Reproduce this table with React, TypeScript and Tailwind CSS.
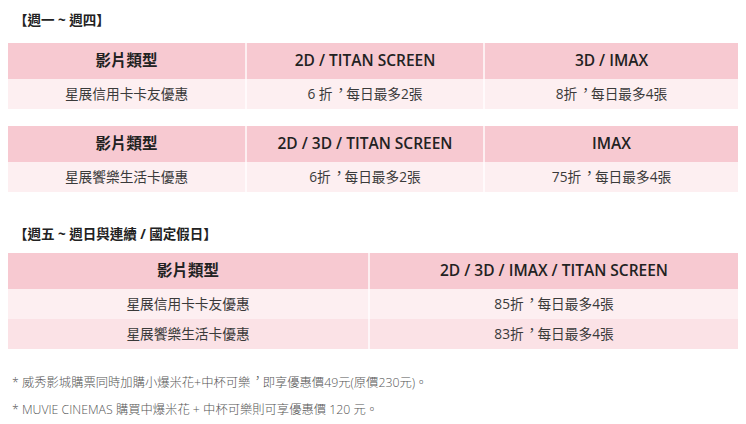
import React from 'react';

const font = { fontFamily: '"Open Sans", "Noto Sans CJK TC", sans-serif' };

type Row = string[];

// 全形逗號置中（台灣排版）
function Comma() {
  return (
    <span className="inline-block w-[1em] overflow-visible">
      <span className="inline-block translate-x-[0.1em] -translate-y-[0.3em]">，</span>
    </span>
  );
}

function Cell({ text }: { text: string }) {
  const parts = text.split('，');
  return (
    <>
      {parts.map((p, i) => (
        <React.Fragment key={i}>
          {p}
          {i < parts.length - 1 && <Comma />}
        </React.Fragment>
      ))}
    </>
  );
}

function PriceTable({
  head,
  rows,
  cols,
}: {
  head: Row;
  rows: Row[];
  cols: string;
}) {
  return (
    <div className="mx-2 text-[#3a3a3a]">
      <div className={`grid ${cols} h-9 bg-[#f7c9d1]`}>
        {head.map((h, i) => (
          <div
            key={i}
            className={`flex items-center justify-center text-[15.5px] font-semibold text-[#222] ${
              i > 0 ? 'border-l-2 border-white/70' : ''
            }`}
          >
            {h}
          </div>
        ))}
      </div>
      {rows.map((r, ri) => (
        <div
          key={ri}
          className={`grid ${cols} h-[30px] ${ri % 2 === 0 ? 'bg-[#fdeff1]' : 'bg-[#fbe2e6]'}`}
        >
          {r.map((c, i) => (
            <div
              key={i}
              className={`flex items-center justify-center text-[13.7px] ${
                i > 0 ? 'border-l-2 border-white/70' : ''
              }`}
            >
              <span>
                <Cell text={c} />
              </span>
            </div>
          ))}
        </div>
      ))}
    </div>
  );
}

export default function App() {
  return (
    <div lang="zh-TW" className="w-[746px] h-[424px] bg-white pt-[11px]" style={font}>
      <div className="pl-[14px] text-[13.5px] font-bold text-[#222] leading-[18px]">【週一 ~ 週四】</div>
      <div className="mt-[14px]">
        <PriceTable
          cols="grid-cols-[237px_238px_1fr]"
          head={['影片類型', '2D / TITAN SCREEN', '3D / IMAX']}
          rows={[['星展信用卡卡友優惠', '6 折，每日最多2張', '8折，每日最多4張']]}
        />
      </div>
      <div className="mt-[17px]">
        <PriceTable
          cols="grid-cols-[237px_238px_1fr]"
          head={['影片類型', '2D / 3D / TITAN SCREEN', 'IMAX']}
          rows={[['星展饗樂生活卡優惠', '6折，每日最多2張', '75折，每日最多4張']]}
        />
      </div>
      <div className="mt-[33px] pl-[14px] text-[13.5px] font-bold text-[#222] leading-[18px]">
        【週五 ~ 週日與連續 / 國定假日】
      </div>
      <div className="mt-[10px]">
        <PriceTable
          cols="grid-cols-[360px_1fr]"
          head={['影片類型', '2D / 3D / IMAX / TITAN SCREEN']}
          rows={[
            ['星展信用卡卡友優惠', '85折，每日最多4張'],
            ['星展饗樂生活卡優惠', '83折，每日最多4張'],
          ]}
        />
      </div>
      <div className="mt-[20px] pl-[12px] text-[12.3px] text-[#555] font-light leading-[27px]">
        <div>
          * 威秀影城購票同時加購小爆米花+中杯可樂
          <Comma />
          即享優惠價49元(原價230元)。
        </div>
        <div>* MUVIE CINEMAS 購買中爆米花 + 中杯可樂則可享優惠價 120 元。</div>
      </div>
    </div>
  );
}
